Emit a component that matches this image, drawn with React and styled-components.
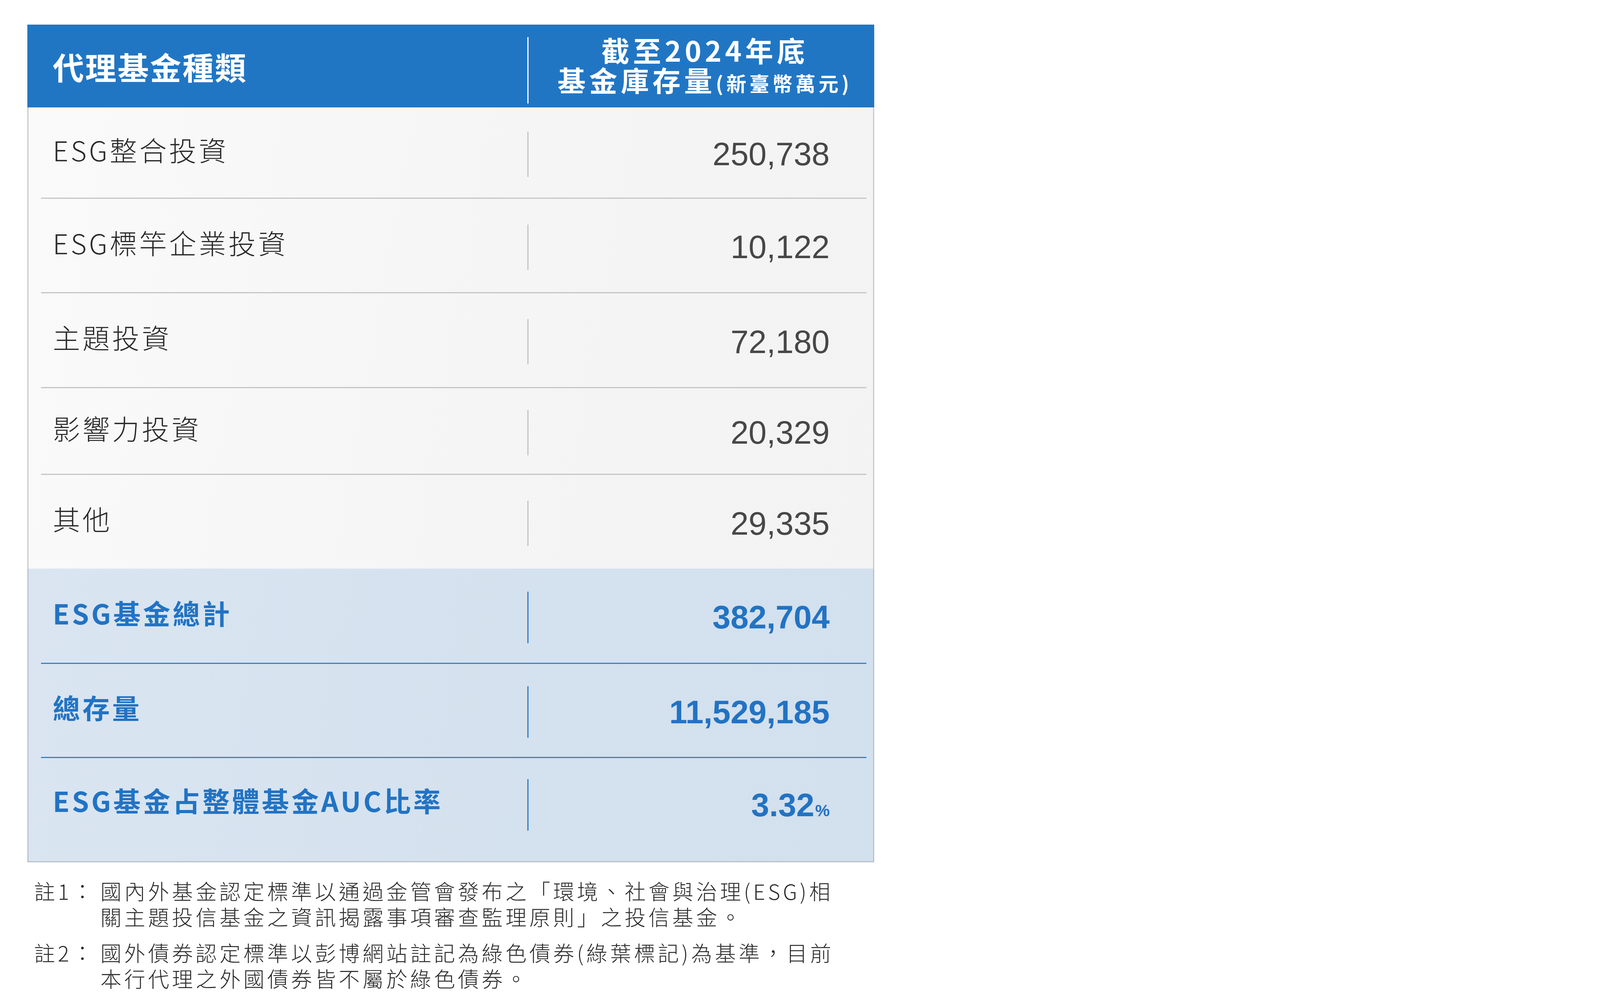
import styled, { createGlobalStyle } from "styled-components";

const CJK = `"Noto Sans CJK TC", "Noto Sans CJK SC", "Noto Sans", sans-serif`;
const NUM = `"Liberation Sans", Arial, sans-serif`;

const GlobalStyle = createGlobalStyle`
  html, body {
    margin: 0;
    padding: 0;
    background: #ffffff;
  }
  body {
    font-family: ${CJK};
  }
`;

const rows = [
  { label: "ESG整合投資", value: "250,738", h: 231 },
  { label: "ESG標竿企業投資", value: "10,122", h: 239 },
  { label: "主題投資", value: "72,180", h: 240 },
  { label: "影響力投資", value: "20,329", h: 219 },
  { label: "其他", value: "29,335", h: 240 },
];

const totals = [
  { label: "ESG基金總計", value: "382,704", h: 241 },
  { label: "總存量", value: "11,529,185", h: 238 },
  { label: "ESG基金占整體基金AUC比率", value: "3.32", unit: "%", h: 232 },
];

export default function App() {
  return (
    <Page>
      <GlobalStyle />
      <Table>
        <Header>
          <HeadLeft>代理基金種類</HeadLeft>
          <HeadDivider />
          <HeadRight>
            <div>截至2024年底</div>
            <div>
              基金庫存量<HeadUnit>(新臺幣萬元)</HeadUnit>
            </div>
          </HeadRight>
        </Header>

        <Section $tone="plain">
          {rows.map((r, i) => (
            <div key={r.label}>
              <Row $h={r.h}>
                <Label $tone="plain">{r.label}</Label>
                <Divider $tone="plain" />
                <Value $tone="plain">{r.value}</Value>
              </Row>
              {i < rows.length - 1 && <Rule $tone="plain" />}
            </div>
          ))}
        </Section>

        <Section $tone="total">
          {totals.map((r, i) => (
            <div key={r.label}>
              <Row $h={r.h}>
                <Label $tone="total">{r.label}</Label>
                <Divider $tone="total" />
                <Value $tone="total">
                  {r.value}
                  {r.unit && <Unit>{r.unit}</Unit>}
                </Value>
              </Row>
              {i < totals.length - 1 && <Rule $tone="total" />}
            </div>
          ))}
        </Section>
      </Table>

      <Notes>
        <Note>
          <NoteTag>註1：</NoteTag>
          <NoteText>
            <Line>國內外基金認定標準以通過金管會發布之「環境、社會與治理(ESG)相</Line>
            <Line>關主題投信基金之資訊揭露事項審查監理原則」之投信基金。</Line>
          </NoteText>
        </Note>
        <Note>
          <NoteTag>註2：</NoteTag>
          <NoteText>
            <Line>國外債券認定標準以彭博網站註記為綠色債券(綠葉標記)為基準，目前</Line>
            <Line>本行代理之外國債券皆不屬於綠色債券。</Line>
          </NoteText>
        </Note>
      </Notes>
    </Page>
  );
}

const Page = styled.div`
  padding: 63px 0 0 70px;
  width: 2168px;
`;

const Table = styled.div`
  width: 2168px;
`;

const Header = styled.div`
  display: grid;
  grid-template-columns: 1280px 3px 1fr;
  align-items: center;
  height: 212px;
  background: #2176c4;
  color: #ffffff;
`;

const HeadLeft = styled.div`
  padding-left: 65px;
  font-family: ${CJK};
  font-weight: 700;
  font-size: 80px;
  letter-spacing: 3px;
  line-height: 1;
`;

const HeadDivider = styled.div`
  width: 3px;
  height: 170px;
  align-self: end;
  margin-bottom: 10px;
  background: #ffffff;
`;

const HeadRight = styled.div`
  padding-left: 18px;
  text-align: center;
  font-family: ${CJK};
  font-weight: 700;
  font-size: 72px;
  line-height: 76px;
  letter-spacing: 9px;
  white-space: nowrap;
`;

const HeadUnit = styled.span`
  font-size: 51px;
  letter-spacing: 8px;
`;

const Section = styled.div`
  border-left: 3px solid ${(p) => (p.$tone === "total" ? "#b8c3ce" : "#c9c9c9")};
  border-right: 3px solid ${(p) => (p.$tone === "total" ? "#b8c3ce" : "#c9c9c9")};
  border-bottom: ${(p) => (p.$tone === "total" ? "3px solid #b8c3ce" : "none")};
  padding-bottom: ${(p) => (p.$tone === "total" ? "32px" : "0")};
  background: ${(p) =>
    p.$tone === "total"
      ? "linear-gradient(100deg, #dae5f1 0%, #d4e1ee 60%, #d3e0ed 100%)"
      : "linear-gradient(100deg, #fafafa 0%, #f5f5f5 55%, #f3f3f3 100%)"};
`;

const Row = styled.div`
  display: grid;
  grid-template-columns: 1277px 3px 1fr;
  align-items: center;
  height: ${(p) => p.$h}px;
`;

const Label = styled.div`
  padding-left: 62px;
  padding-bottom: 16px;
  font-family: ${CJK};
  font-size: 70px;
  line-height: 1;
  white-space: nowrap;
  font-weight: ${(p) => (p.$tone === "total" ? 700 : 300)};
  letter-spacing: 6px;
  color: ${(p) => (p.$tone === "total" ? "#2273c3" : "#2a2a2a")};
`;

const Divider = styled.div`
  width: 3px;
  height: ${(p) => (p.$tone === "total" ? 132 : 116)}px;
  margin-top: 8px;
  background: ${(p) => (p.$tone === "total" ? "#2d7cc7" : "#c4c4c4")};
`;

const Value = styled.div`
  padding-right: 111px;
  padding-top: 8px;
  text-align: right;
  font-family: ${NUM};
  font-size: 83px;
  line-height: 1;
  white-space: nowrap;
  font-weight: ${(p) => (p.$tone === "total" ? 700 : 400)};
  color: ${(p) => (p.$tone === "total" ? "#2273c3" : "#474747")};
`;

const Unit = styled.span`
  font-size: 42px;
  margin-left: 2px;
`;

const Rule = styled.div`
  height: 3px;
  margin: 0 17px 0 32px;
  background: ${(p) => (p.$tone === "total" ? "#3582c9" : "#c6c6c6")};
`;

const Notes = styled.div`
  margin-top: 40px;
  padding-left: 17px;
`;

const Note = styled.div`
  display: grid;
  grid-template-columns: 170px auto;
  font-family: ${CJK};
  font-weight: 300;
  font-size: 54px;
  line-height: 66px;
  letter-spacing: 7px;
  color: #2b2b2b;

  & + & {
    margin-top: 26px;
  }
`;

const NoteTag = styled.div`
  white-space: nowrap;
`;

const NoteText = styled.div`
  display: flex;
  flex-direction: column;
`;

const Line = styled.span`
  white-space: nowrap;
`;
